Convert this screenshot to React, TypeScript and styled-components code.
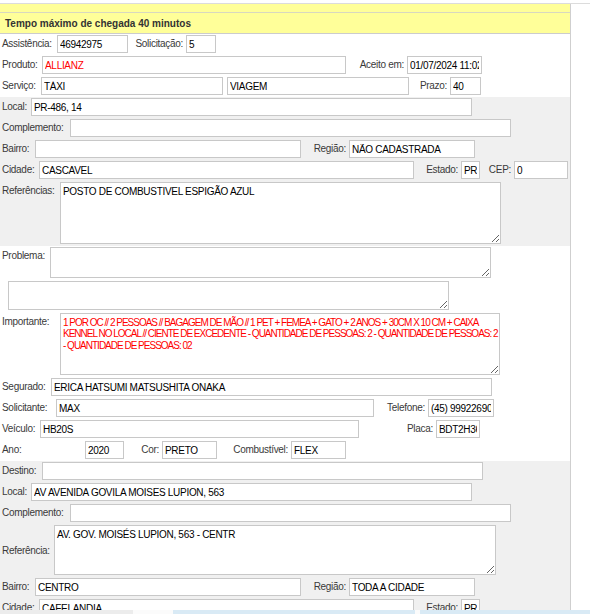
import React from "react";
import styled, { createGlobalStyle } from "styled-components";

const GlobalStyle = createGlobalStyle`
  html, body {
    margin: 0;
    padding: 0;
    overflow: hidden;
    background: #fff;
  }
  body {
    font-family: "Liberation Sans", Arial, sans-serif;
    font-size: 10px;
    letter-spacing: -0.3px;
    color: #333;
  }
`;

const Page = styled.div`
  padding-top: 3px;
`;

const Frame = styled.div`
  border-top: 1px solid #dcdcdc;
`;

const Panel = styled.div`
  width: 570px;
  border-right: 1px solid #cfcfcf;
`;

const YellowStrip = styled.div`
  height: 8px;
  background: #ffff99;
`;

const TitleBar = styled.div`
  height: 20px;
  display: flex;
  align-items: center;
  padding-left: 5px;
  background: #ffff99;
  border-top: 1px solid #d8d8c0;
  border-bottom: 1px solid #cccccc;
  font-size: 10px;
  letter-spacing: 0;
  font-weight: bold;
  color: #333;
`;

const Section = styled.div<{ $shade?: boolean }>`
  background: ${(p) => (p.$shade ? "#f0f0f0" : "#fff")};
  padding-left: 2px;
`;

const Row = styled.div<{ $h?: number; $pl?: number }>`
  display: flex;
  align-items: flex-start;
  box-sizing: border-box;
  height: ${(p) => p.$h ?? 21}px;
  padding-top: 1px;
  padding-left: ${(p) => p.$pl ?? 0}px;
`;

const Label = styled.span<{ $w: number; $right?: boolean; $mid?: boolean }>`
  flex: none;
  width: ${(p) => p.$w}px;
  box-sizing: border-box;
  line-height: 18px;
  white-space: nowrap;
  text-align: ${(p) => (p.$right ? "right" : "left")};
  padding-right: ${(p) => (p.$right ? 3 : 0)}px;
  align-self: ${(p) => (p.$mid ? "center" : "flex-start")};
  color: #3a3a3a;
`;

const Field = styled.input<{ $w: number; $red?: boolean; $ml?: number }>`
  flex: none;
  width: ${(p) => p.$w}px;
  height: 18px;
  box-sizing: border-box;
  margin: 0 0 0 ${(p) => p.$ml ?? 0}px;
  padding: 0 2px;
  border: 1px solid #c8c8c8;
  border-radius: 0;
  background: #fff;
  font: inherit;
  letter-spacing: inherit;
  color: ${(p) => (p.$red ? "#ff0000" : "#000")};
  outline: none;
`;

const Area = styled.textarea<{ $w: number; $h: number; $red?: boolean; $tight?: boolean }>`
  flex: none;
  width: ${(p) => p.$w}px;
  height: ${(p) => p.$h}px;
  box-sizing: border-box;
  margin: 0;
  padding: 3px 2px;
  border: 1px solid #c8c8c8;
  border-radius: 0;
  background: #fff;
  font: inherit;
  letter-spacing: ${(p) => (p.$tight ? "-1px" : "inherit")};
  white-space: ${(p) => (p.$tight ? "pre" : "pre-wrap")};
  line-height: 11.4px;
  color: ${(p) => (p.$red ? "#ff0000" : "#000")};
  outline: none;
  overflow: hidden;
`;

const BottomBar = styled.div`
  position: fixed;
  left: 0;
  right: 0;
  bottom: 0;
  height: 4px;
  display: flex;
`;

const BarPiece = styled.div<{ $w?: number; $c: string }>`
  flex: ${(p) => (p.$w ? `0 0 ${p.$w}px` : "1")};
  background: ${(p) => p.$c};
`;

const importante =
  "1 POR OC // 2 PESSOAS // BAGAGEM DE MÃO // 1 PET + FEMEA + GATO + 2 ANOS + 30CM X 10 CM + CAIXA\n" +
  "KENNEL NO LOCAL // CIENTE DE EXCEDENTE - QUANTIDADE DE PESSOAS: 2 - QUANTIDADE DE PESSOAS: 2\n" +
  "- QUANTIDADE DE PESSOAS: 02";

const App: React.FC = () => {
  return (
    <Page>
      <GlobalStyle />
      <Frame>
        <Panel>
          <YellowStrip />
          <TitleBar>Tempo máximo de chegada 40 minutos</TitleBar>

          <Section>
            <Row>
              <Label $w={55}>Assistência:</Label>
              <Field $w={71} readOnly value="46942975" />
              <Label $w={58} $right>Solicitação:</Label>
              <Field $w={30} readOnly value="5" />
            </Row>
            <Row>
              <Label $w={40}>Produto:</Label>
              <Field $w={304} $red readOnly value="ALLIANZ" />
              <Label $w={61} $right>Aceito em:</Label>
              <Field $w={75} readOnly value="01/07/2024 11:02" />
            </Row>
            <Row>
              <Label $w={39}>Serviço:</Label>
              <Field $w={182} readOnly value="TÁXI" />
              <Field $w={182} $ml={4} readOnly value="VIAGEM" />
              <Label $w={41} $right>Prazo:</Label>
              <Field $w={31} readOnly value="40" />
            </Row>
          </Section>

          <Section $shade>
            <Row>
              <Label $w={29}>Local:</Label>
              <Field $w={441} readOnly value="PR-486, 14" />
            </Row>
            <Row>
              <Label $w={68}>Complemento:</Label>
              <Field $w={441} readOnly value="" />
            </Row>
            <Row>
              <Label $w={33}>Bairro:</Label>
              <Field $w={266} readOnly value="" />
              <Label $w={48} $right>Região:</Label>
              <Field $w={126} readOnly value="NÃO CADASTRADA" />
            </Row>
            <Row>
              <Label $w={37}>Cidade:</Label>
              <Field $w={375} readOnly value="CASCAVEL" />
              <Label $w={47} $right>Estado:</Label>
              <Field $w={19} readOnly value="PR" />
              <Label $w={34} $right>CEP:</Label>
              <Field $w={54} readOnly value="0" />
            </Row>
            <Row $h={65}>
              <Label $w={58}>Referências:</Label>
              <Area $w={441} $h={62} readOnly defaultValue="POSTO DE COMBUSTIVEL ESPIGÃO AZUL" />
            </Row>
          </Section>

          <Section>
            <Row $h={34}>
              <Label $w={48}>Problema:</Label>
              <Area $w={441} $h={31} readOnly defaultValue="" />
            </Row>
            <Row $h={32} $pl={6}>
              <Area $w={441} $h={29} readOnly defaultValue="" />
            </Row>
            <Row $h={65}>
              <Label $w={58}>Importante:</Label>
              <Area $w={440} $h={62} $red $tight readOnly defaultValue={importante} />
            </Row>
            <Row>
              <Label $w={49}>Segurado:</Label>
              <Field $w={441} readOnly value="ERICA HATSUMI MATSUSHITA ONAKA" />
            </Row>
            <Row>
              <Label $w={54}>Solicitante:</Label>
              <Field $w={318} readOnly value="MAX" />
              <Label $w={54} $right>Telefone:</Label>
              <Field $w={66} readOnly value="(45) 999226900" />
            </Row>
            <Row>
              <Label $w={38}>Veículo:</Label>
              <Field $w={319} readOnly value="HB20S" />
              <Label $w={77} $right>Placa:</Label>
              <Field $w={44} readOnly value="BDT2H36" />
            </Row>
            <Row>
              <Label $w={83}>Ano:</Label>
              <Field $w={39} readOnly value="2020" />
              <Label $w={38} $right>Cor:</Label>
              <Field $w={55} readOnly value="PRETO" />
              <Label $w={74} $right>Combustível:</Label>
              <Field $w={55} readOnly value="FLEX" />
            </Row>
          </Section>

          <Section $shade>
            <Row>
              <Label $w={40}>Destino:</Label>
              <Field $w={441} readOnly value="" />
            </Row>
            <Row>
              <Label $w={29}>Local:</Label>
              <Field $w={441} readOnly value="AV AVENIDA GOVILA MOISES LUPION, 563" />
            </Row>
            <Row>
              <Label $w={68}>Complemento:</Label>
              <Field $w={441} readOnly value="" />
            </Row>
            <Row $h={53}>
              <Label $w={52} $mid>Referência:</Label>
              <Area $w={442} $h={50} readOnly defaultValue="AV. GOV. MOISÉS LUPION, 563 - CENTR" />
            </Row>
            <Row>
              <Label $w={33}>Bairro:</Label>
              <Field $w={266} readOnly value="CENTRO" />
              <Label $w={48} $right>Região:</Label>
              <Field $w={126} readOnly value="TODA A CIDADE" />
            </Row>
            <Row>
              <Label $w={37}>Cidade:</Label>
              <Field $w={375} readOnly value="CAFELANDIA" />
              <Label $w={47} $right>Estado:</Label>
              <Field $w={19} readOnly value="PR" />
            </Row>
          </Section>
        </Panel>
      </Frame>

      <BottomBar>
        <BarPiece $w={133} $c="#ececec" />
        <BarPiece $w={40} $c="#fbfbfb" />
        <BarPiece $w={242} $c="#d9eaf5" />
        <BarPiece $w={5} $c="#fbfbfb" />
        <BarPiece $c="#d9eaf5" />
      </BottomBar>
    </Page>
  );
};

export default App;
